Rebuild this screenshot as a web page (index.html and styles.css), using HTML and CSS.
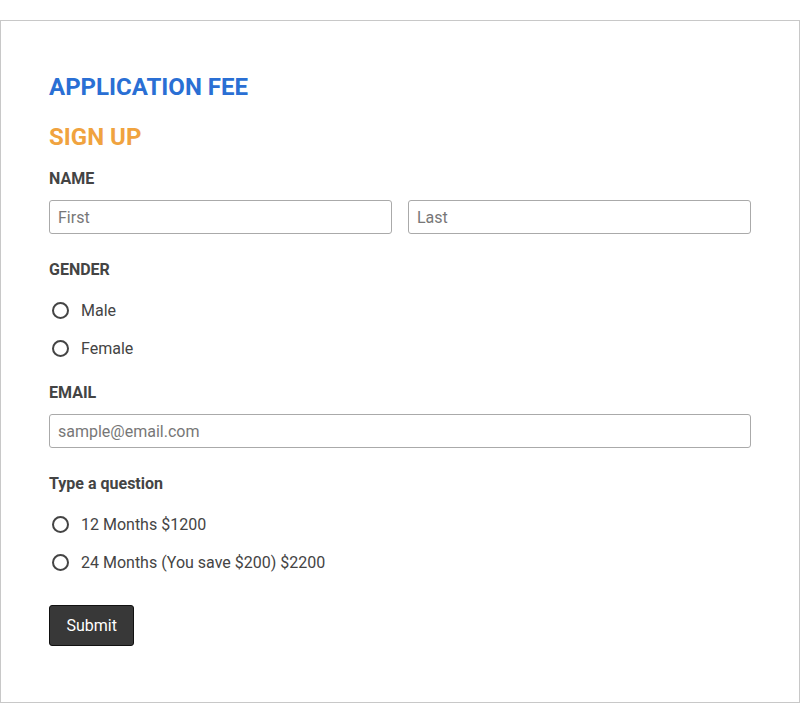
FILE: index.html
```html
<!DOCTYPE html>
<html lang="en">
  <head>
    <meta charset="UTF-8" />
    <meta name="viewport" content="width=device-width, initial-scale=1.0" />
    <title>Application Fee</title>
    <link rel="stylesheet" href="styles.css">
  </head>
  <body>
    <form class="container">
      <h1 class="title">APPLICATION FEE</h1>
      <h2 class="subtitle">SIGN UP</h2>

      <!-- name -->
      <div class="field">
        <label class="label">NAME</label>
        <div class="name-row">
          <input type="text" class="input" placeholder="First" />
          <input type="text" class="input" placeholder="Last" />
        </div>
      </div>

      <!-- gender -->
      <div class="field">
        <label class="label">GENDER</label>
        <div class="options">
          <label class="option"><input type="radio" name="gender" /> Male</label>
          <label class="option"><input type="radio" name="gender" /> Female</label>
        </div>
      </div>

      <!-- email -->
      <div class="field">
        <label class="label">EMAIL</label>
        <input type="email" class="input" placeholder="sample@email.com" />
      </div>

      <!-- plan -->
      <div class="field">
        <label class="label label-plain">Type a question</label>
        <div class="options">
          <label class="option"><input type="radio" name="plan" /> 12 Months $1200</label>
          <label class="option"><input type="radio" name="plan" /> 24 Months (You save $200) $2200</label>
        </div>
      </div>

      <button type="button" class="btn">Submit</button>
    </form>
  </body>
</html>
```

FILE: styles.css
```css
body {
  font-family: Roboto, "Liberation Sans", sans-serif;
  margin: 0;
  padding-top: 20px;
  background-color: #fff;
  color: #444;
}
.container {
  width: 800px;
  height: 683px;
  box-sizing: border-box;
  padding: 48px 48px 0;
  border: 1px solid #c8c8c8;
}
.title {
  margin: 4px 0 0;
  font-size: 24px;
  font-weight: 700;
  color: #2a6fd4;
}
.subtitle {
  margin: 22px 0 0;
  font-size: 24px;
  font-weight: 700;
  color: #f0a33f;
}
.field {
  margin-top: 26px;
}
.subtitle + .field {
  margin-top: 18px;
}
.label {
  display: block;
  font-size: 16px;
  font-weight: 700;
  color: #444;
  margin-bottom: 12px;
}
.name-row {
  display: flex;
  gap: 16px;
}
.input {
  display: block;
  width: 100%;
  height: 34px;
  box-sizing: border-box;
  padding: 0 8px;
  border: 1px solid #aaa;
  border-radius: 3px;
  font-family: inherit;
  font-size: 16px;
  color: #444;
  outline: none;
}
.input::placeholder {
  color: #777;
}
.options {
  display: flex;
  flex-direction: column;
  gap: 19px;
  padding-top: 10px;
  margin-bottom: -1px;
}
.option {
  display: flex;
  align-items: center;
  gap: 12px;
  font-size: 16px;
  color: #444;
  line-height: 19px;
}
.option input {
  appearance: none;
  width: 17px;
  height: 17px;
  margin: 0 0 0 3px;
  border: 2px solid #444;
  border-radius: 50%;
  box-sizing: border-box;
}
.btn {
  margin-top: 34px;
  padding: 0 16.5px;
  height: 41px;
  background-color: #383838;
  color: #fff;
  border: 1px solid #111;
  border-radius: 3px;
  font-family: inherit;
  font-size: 16px;
  cursor: pointer;
}
```
